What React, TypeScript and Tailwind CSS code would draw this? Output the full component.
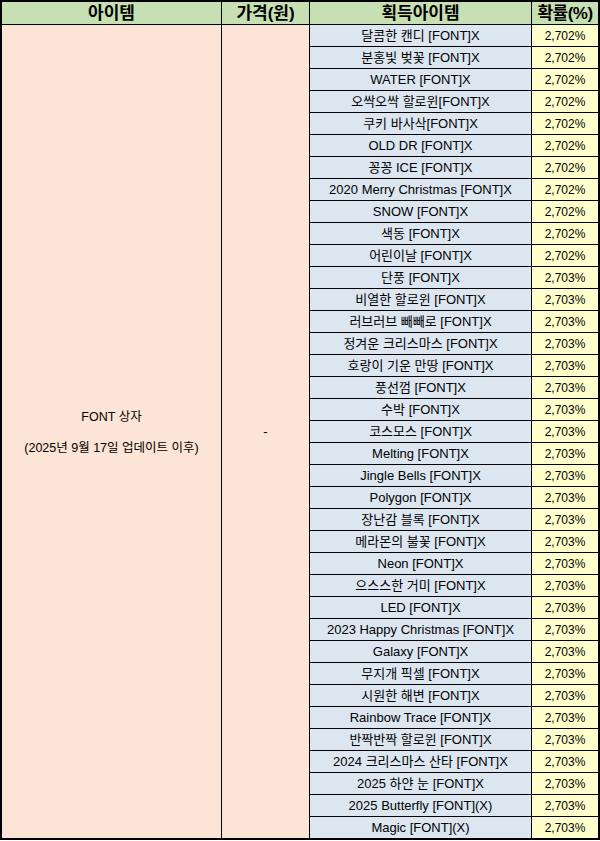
import React from "react";

const items: [string, string][] = [
  ["달콤한 캔디 [FONT]X", "2,702%"],
  ["분홍빛 벚꽃 [FONT]X", "2,702%"],
  ["WATER [FONT]X", "2,702%"],
  ["오싹오싹 할로윈[FONT]X", "2,702%"],
  ["쿠키 바사삭[FONT]X", "2,702%"],
  ["OLD DR [FONT]X", "2,702%"],
  ["꽁꽁 ICE [FONT]X", "2,702%"],
  ["2020 Merry Christmas [FONT]X", "2,702%"],
  ["SNOW [FONT]X", "2,702%"],
  ["색동 [FONT]X", "2,702%"],
  ["어린이날 [FONT]X", "2,702%"],
  ["단풍 [FONT]X", "2,703%"],
  ["비열한 할로윈 [FONT]X", "2,703%"],
  ["러브러브 빼빼로 [FONT]X", "2,703%"],
  ["정겨운 크리스마스 [FONT]X", "2,703%"],
  ["호랑이 기운 만땅 [FONT]X", "2,703%"],
  ["풍선껌 [FONT]X", "2,703%"],
  ["수박 [FONT]X", "2,703%"],
  ["코스모스 [FONT]X", "2,703%"],
  ["Melting [FONT]X", "2,703%"],
  ["Jingle Bells [FONT]X", "2,703%"],
  ["Polygon [FONT]X", "2,703%"],
  ["장난감 블록 [FONT]X", "2,703%"],
  ["메라몬의 불꽃 [FONT]X", "2,703%"],
  ["Neon [FONT]X", "2,703%"],
  ["으스스한 거미 [FONT]X", "2,703%"],
  ["LED [FONT]X", "2,703%"],
  ["2023 Happy Christmas [FONT]X", "2,703%"],
  ["Galaxy [FONT]X", "2,703%"],
  ["무지개 픽셀 [FONT]X", "2,703%"],
  ["시원한 해변 [FONT]X", "2,703%"],
  ["Rainbow Trace [FONT]X", "2,703%"],
  ["반짝반짝 할로윈 [FONT]X", "2,703%"],
  ["2024 크리스마스 산타 [FONT]X", "2,703%"],
  ["2025 하얀 눈 [FONT]X", "2,703%"],
  ["2025 Butterfly [FONT](X)", "2,703%"],
  ["Magic [FONT](X)", "2,703%"],
];

export default function App() {
  return (
    <div className="w-[600px] h-[841px] bg-white">
      <div
        className="w-[600px] h-[840px] border-2 border-black bg-black grid grid-cols-[219px_87px_221px_66px] grid-rows-[22px_repeat(37,21px)] gap-px text-black text-[13px] leading-none"
        style={{ fontFamily: '"Liberation Sans", "Noto Sans CJK KR", sans-serif' }}
      >
        <div className="bg-[#c6e0b4] flex items-center justify-center text-[17px] font-bold">아이템</div>
        <div className="bg-[#c6e0b4] flex items-center justify-center text-[17px] font-bold">가격(원)</div>
        <div className="bg-[#c6e0b4] flex items-center justify-center text-[17px] font-bold">획득아이템</div>
        <div className="bg-[#c6e0b4] flex items-center justify-center text-[17px] font-bold tracking-[-0.5px]">확률(%)</div>

        <div className="bg-[#fce4d6] [grid-column:1] [grid-row:2/39] flex flex-col items-center justify-center gap-[18px] pt-[2px] text-[12.5px]">
          <span>FONT 상자</span>
          <span>(2025년 9월 17일 업데이트 이후)</span>
        </div>
        <div className="bg-[#fce4d6] [grid-column:2] [grid-row:2/39] flex items-center justify-center">-</div>

        {items.map(([name, pct], i) => (
          <React.Fragment key={i}>
            <div className="bg-[#dce6f1] [grid-column:3] flex items-center justify-center">{name}</div>
            <div className="bg-[#ffffcc] [grid-column:4] flex items-center justify-center text-[12px]">{pct}</div>
          </React.Fragment>
        ))}
      </div>
    </div>
  );
}
